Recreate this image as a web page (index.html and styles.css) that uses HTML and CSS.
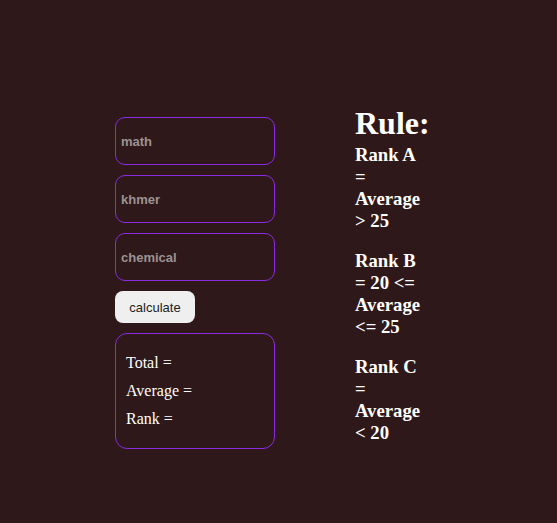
FILE: index.html
```html
<!DOCTYPE html>
<html>
<head>
<meta charset="utf-8">
<link rel="stylesheet" href="styles.css">
</head>
<body>
<div class="page">
  <div class="calc">
    <input class="field" type="text" placeholder="math">
    <input class="field" type="text" placeholder="khmer">
    <input class="field" type="text" placeholder="chemical">
    <button class="btn">calculate</button>
    <div class="result">
      <p>Total =</p>
      <p>Average =</p>
      <p>Rank =</p>
    </div>
  </div>
  <div class="rules">
    <h1 class="title">Rule:</h1>
    <h3 class="rule">Rank A = Average &gt; 25</h3>
    <h3 class="rule">Rank B = 20 &lt;= Average &lt;= 25</h3>
    <h3 class="rule">Rank C = Average &lt; 20</h3>
  </div>
</div>
</body>
</html>
```
FILE: styles.css
```css
html, body {
  margin: 0;
  padding: 0;
  background: #2e1819;
  height: 100%;
}
body {
  font-family: "Liberation Serif", serif;
  color: #ffffff;
}
.page {
  display: flex;
  align-items: flex-start;
  gap: 80px;
  padding: 105px 0 0 115px;
}
.calc {
  margin-top: 12px;
  width: 160px;
  display: flex;
  flex-direction: column;
  align-items: flex-start;
  gap: 10px;
}
.field {
  box-sizing: border-box;
  width: 160px;
  height: 48px;
  margin: 0;
  border: 1px solid #8a2be2;
  border-radius: 10px;
  background: transparent;
  padding: 0 5px;
  font-family: "Liberation Sans", Arial, sans-serif;
  font-size: 13px;
  font-weight: bold;
  color: #ffffff;
  outline: none;
}
.field::placeholder {
  color: #9c9292;
  opacity: 1;
}
.btn {
  box-sizing: border-box;
  width: 80px;
  height: 32px;
  border: none;
  border-radius: 8px;
  background: #efefef;
  font-family: "Liberation Sans", Arial, sans-serif;
  font-size: 13px;
  color: #222222;
  padding: 0;
}
.result {
  box-sizing: border-box;
  width: 160px;
  border: 1px solid #8a2be2;
  border-radius: 12px;
  padding: 15px 10px 15px 10px;
}
.result p {
  margin: 0;
  font-size: 16px;
  line-height: 28px;
}
.rules {
  width: 70px;
}
.title {
  margin: 0 0 2px 0;
  font-size: 32px;
  line-height: 37px;
  font-weight: bold;
}
.rule {
  margin: 0 0 18px 0;
  font-size: 18.72px;
  line-height: 22px;
  font-weight: bold;
}
```
